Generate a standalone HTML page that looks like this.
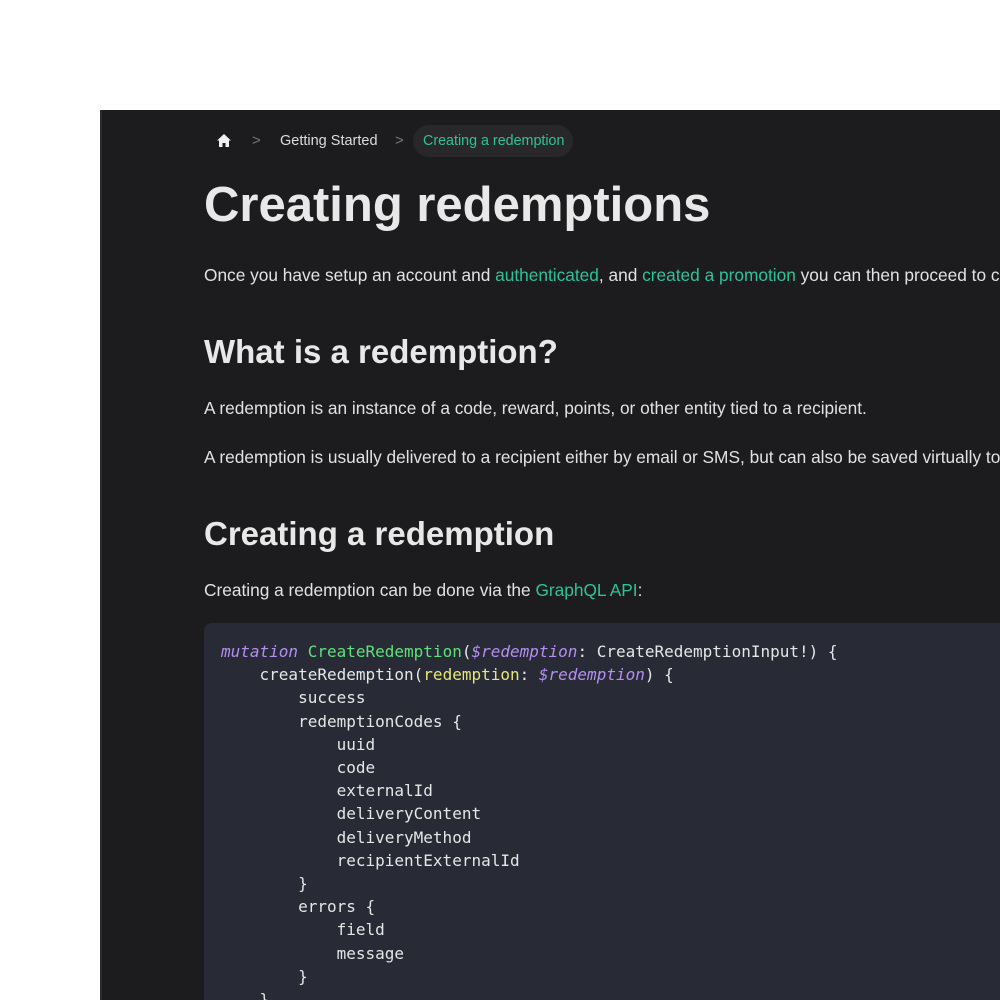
<!DOCTYPE html>
<html><head><meta charset="utf-8"><style>
*{margin:0;padding:0;box-sizing:border-box}
body{width:1000px;height:1000px;background:#fff;position:relative;overflow:hidden;font-family:"Liberation Sans",sans-serif}
.panel{position:absolute;left:100px;top:110px;width:900px;height:890px;background:#1c1c1e;border-left:2px solid #2c2c2e;overflow:hidden}
.a{position:absolute;white-space:nowrap}
.t{color:#e2e2e2;font-size:17.3px}
.g{color:#2ec295}
h1,h2{position:absolute;white-space:nowrap;color:#e8e8e8;font-weight:bold}
.code{position:absolute;left:102px;top:513px;width:820px;height:420px;background:#282a36;border-radius:8px;font-family:"DejaVu Sans Mono",monospace;font-size:16px;line-height:23.2px;color:#e6e6e6;padding:17px 0 0 17px;white-space:pre}
.k{color:#b48ef0;font-style:italic}.f{color:#5fe07a}.y{color:#e6e67a}
</style></head><body>
<div class="panel">
<svg class="a" style="left:114px;top:23px" width="16" height="15" viewBox="0 0 16 15"><path d="M8 1 L1 7.5 H3 V14 H6.5 V10 H9.5 V14 H13 V7.5 H15 Z" fill="#f0f0f0"/></svg>
<div class="a" style="left:150px;top:22px;color:#777;font-size:15px">&gt;</div>
<div class="a" style="left:178px;top:23px;color:#dcdcdc;font-size:14.5px">Getting Started</div>
<div class="a" style="left:293px;top:22px;color:#777;font-size:15px">&gt;</div>
<div class="a" style="left:311px;top:15px;height:32px;padding:0 9px 0 10px;border-radius:16px;background:#28282a;color:#2ec295;font-size:14.3px;line-height:32px">Creating a redemption</div>
<h1 style="left:102px;top:67px;font-size:49px">Creating redemptions</h1>
<div class="a t" style="left:102px;top:155px">Once you have setup an account and <span class="g">authenticated</span>, and <span class="g">created a promotion</span> you can then proceed to create a redemption.</div>
<h2 style="left:102px;top:223px;font-size:33px">What is a redemption?</h2>
<div class="a t" style="left:102px;top:288px">A redemption is an instance of a code, reward, points, or other entity tied to a recipient.</div>
<div class="a t" style="left:102px;top:337px">A redemption is usually delivered to a recipient either by email or SMS, but can also be saved virtually to be used later.</div>
<h2 style="left:102px;top:405px;font-size:33px">Creating a redemption</h2>
<div class="a t" style="left:102px;top:470px">Creating a redemption can be done via the <span class="g">GraphQL API</span>:</div>
<div class="code"><span class="k">mutation</span> <span class="f">CreateRedemption</span>(<span class="k">$redemption</span>: CreateRedemptionInput!) {
    createRedemption(<span class="y">redemption</span>: <span class="k">$redemption</span>) {
        success
        redemptionCodes {
            uuid
            code
            externalId
            deliveryContent
            deliveryMethod
            recipientExternalId
        }
        errors {
            field
            message
        }
    }
}</div>
</div>
</body></html>
